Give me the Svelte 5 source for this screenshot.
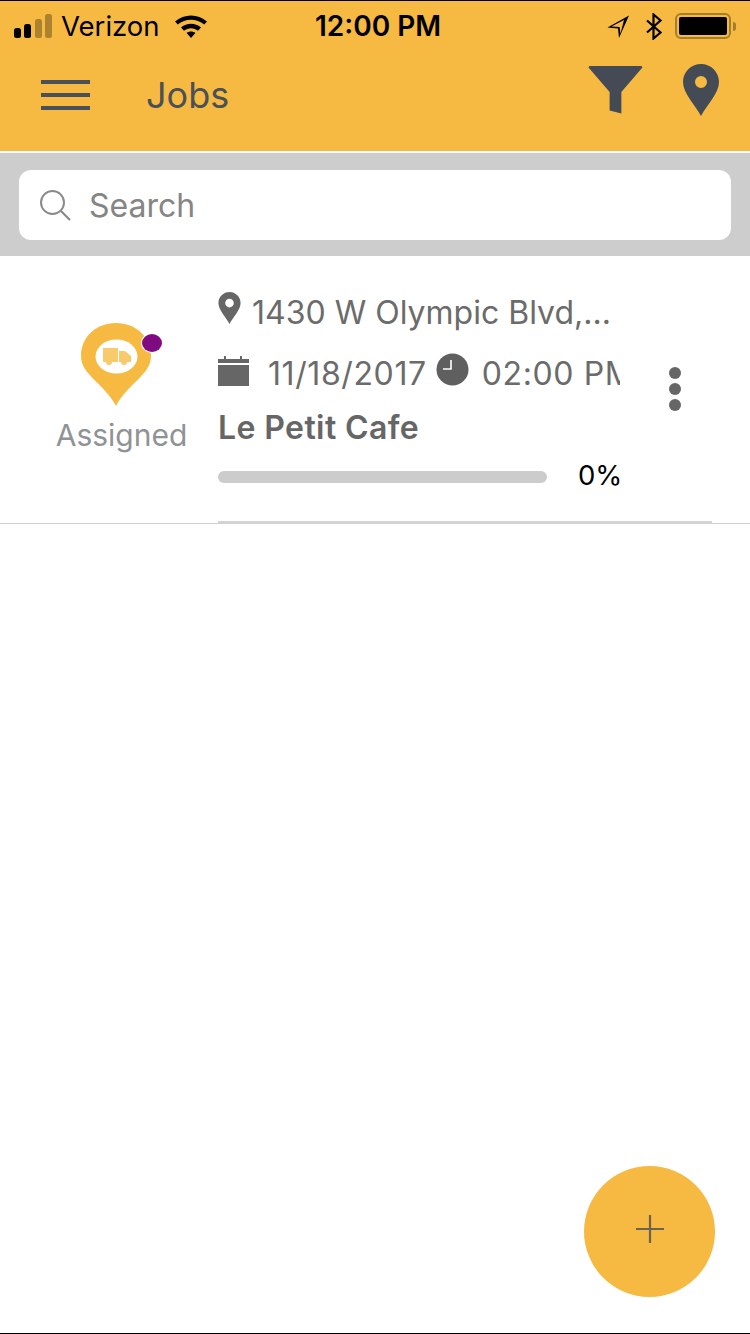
<script>
  const job = {
    address: '1430 W Olympic Blvd,...',
    date: '11/18/2017',
    time: '02:00 PM',
    name: 'Le Petit Cafe',
    status: 'Assigned',
    progress: 0
  };
</script>

<div class="screen">
  <header class="top">
    <div class="status">
      <div class="status-left">
        <svg class="signal" width="40" height="24" viewBox="0 0 40 24">
          <rect x="0" y="14" width="7" height="10" rx="2.5" fill="#000" />
          <rect x="10" y="10" width="7" height="14" rx="2.5" fill="#000" />
          <rect x="21" y="5" width="7" height="19" rx="2.5" fill="#000" opacity="0.3" />
          <rect x="31" y="0" width="7" height="24" rx="2.5" fill="#000" opacity="0.3" />
        </svg>
        <span class="carrier">Verizon</span>
        <svg class="wifi" width="34" height="24" viewBox="0 0 34 24">
          <path d="M1 7.5C10 -0.5 24 -0.5 33 7.5L30.2 10.6C22.8 4.2 11.2 4.2 3.8 10.6Z" fill="#000" />
          <path d="M7 13.6C12.8 8.6 21.2 8.6 27 13.6L24 16.8C20 13.4 14 13.4 10 16.8Z" fill="#000" />
          <path d="M12.6 19C15.2 17 18.8 17 21.4 19L17 24Z" fill="#000" />
        </svg>
      </div>
      <span class="clock">12:00 PM</span>
      <div class="status-right">
        <svg width="24" height="24" viewBox="0 0 24 24">
          <path d="M23 1.5L1.5 13.5L12 14.5L13 24Z M18 6L5.5 12.5L13.6 13L14.5 19.5Z" fill="#000" fill-rule="evenodd" />
        </svg>
        <svg class="bt" width="18" height="27" viewBox="0 0 18 27">
          <path d="M2 7.5L15.5 19.5L8.5 25.5V1.5L15.5 7.5L2 19.5" fill="none" stroke="#000" stroke-width="2.2" />
        </svg>
        <div class="battery"><div class="battery-fill"></div></div>
        <div class="battery-tip"></div>
      </div>
    </div>
    <div class="toolbar">
      <div class="burger"><span></span><span></span><span></span></div>
      <h1>Jobs</h1>
      <svg class="filter" width="56" height="48" viewBox="0 0 56 49">
        <path d="M1 1.5Q1 0 3 0H54Q56 0 56 1.5L34.5 26.5V48.5L22.5 45.5V26.5Z" fill="#444b55" />
      </svg>
      <svg class="pin" width="36" height="52" viewBox="0 0 36 52">
        <path fill-rule="evenodd" d="M18 0C8 0 0 8 0 18C0 29 12 41 18 52C24 41 36 29 36 18C36 8 28 0 18 0ZM18 12A6 6 0 1 1 18 24A6 6 0 1 1 18 12Z" fill="#444b55" />
      </svg>
    </div>
  </header>

  <div class="search-wrap">
    <div class="search">
      <svg width="32" height="32" viewBox="0 0 32 32">
        <circle cx="13.5" cy="13.5" r="11.5" fill="none" stroke="#8a8a8a" stroke-width="2" />
        <path d="M22 22L31 31" stroke="#8a8a8a" stroke-width="2.2" />
      </svg>
      <span>Search</span>
    </div>
  </div>

  <section class="row">
    <div class="state">
      <div class="marker">
        <svg width="72" height="84" viewBox="0 0 72 84">
          <path d="M36 0C16 0 1 14 1 33C1 52 24 60 36 83C48 60 71 52 71 33C71 14 56 0 36 0Z" fill="#f6ba42" />
          <ellipse cx="36.5" cy="33.5" rx="21" ry="17" fill="#fff" />
          <path d="M23 25H38V39H23Z M39 28H45L51 33V39H39Z" fill="#f8ca6c" />
          <circle cx="29" cy="39" r="3" fill="#f8ca6c" />
          <circle cx="44" cy="39" r="3" fill="#f8ca6c" />
        </svg>
        <span class="dot"></span>
      </div>
      <span class="state-label">{job.status}</span>
    </div>

    <div class="info">
      <div class="line address">
        <svg width="23" height="32" viewBox="0 0 36 52">
          <path fill-rule="evenodd" d="M18 0C8 0 0 8 0 18C0 29 12 41 18 52C24 41 36 29 36 18C36 8 28 0 18 0ZM18 11A7 7 0 1 1 18 25A7 7 0 1 1 18 11Z" fill="#666" />
        </svg>
        <span>{job.address}</span>
      </div>
      <div class="line when">
        <svg class="cal" width="31" height="30" viewBox="0 0 31 30">
          <path d="M0 3H6V0H8V3H22V0H24V3H31V7H0Z M0 9H31V30H0Z" fill="#666" />
        </svg>
        <span class="date">{job.date}</span>
        <svg class="time-icon" width="33" height="33" viewBox="0 0 33 33">
          <circle cx="16.5" cy="16.5" r="16" fill="#5f5f5f" />
          <path d="M15 7V16H7" fill="none" stroke="#fff" stroke-width="1.6" />
        </svg>
        <span class="time">{job.time}</span>
      </div>
      <div class="name">{job.name}</div>
      <div class="progress">
        <div class="track"></div>
        <span>{job.progress}%</span>
      </div>
    </div>

    <div class="more"><i></i><i></i><i></i></div>
    <div class="inner-line"></div>
  </section>

  <button class="fab" aria-label="Add job">
    <svg width="30" height="30" viewBox="0 0 30 30">
      <path d="M15 1V29M1 15H29" stroke="#6b6250" stroke-width="2.2" />
    </svg>
  </button>
</div>

<style>
  :global(body) {
    margin: 0;
    background: #fff;
  }

  .screen {
    position: relative;
    width: 750px;
    height: 1334px;
    box-sizing: border-box;
    border-top: 1px solid #000;
    border-bottom: 1px solid #000;
    overflow: hidden;
    background: #fff;
    font-family: Inter, Roboto, "Liberation Sans", sans-serif;
  }

  .top {
    background: #f6ba42;
    height: 150px;
  }

  .status {
    height: 50px;
    padding: 0 14px 0 14px;
    display: flex;
    align-items: center;
    color: #000;
  }

  .status-left {
    width: 301px;
    flex: none;
    display: flex;
    align-items: center;
  }

  .signal {
    flex: none;
    margin-right: 7px;
  }

  .carrier {
    font-size: 27.5px;
    margin-right: 14px;
  }

  .clock {
    font-size: 28px;
    font-weight: 600;
    white-space: nowrap;
  }

  .status-right {
    margin-left: auto;
    display: flex;
    align-items: center;
    justify-content: flex-end;
  }

  .bt {
    margin: 0 12px 0 15px;
  }

  .battery {
    box-sizing: border-box;
    width: 56px;
    height: 26px;
    border: 2px solid #a47e2e;
    border-radius: 6px;
    padding: 2px;
  }

  .battery-fill {
    height: 100%;
    background: #000;
    border-radius: 2px;
  }

  .battery-tip {
    width: 3px;
    height: 9px;
    margin-left: 2px;
    background: #a47e2e;
    border-radius: 0 3px 3px 0;
  }

  .toolbar {
    height: 100px;
    padding: 0 31px 0 41px;
    display: flex;
    align-items: center;
  }

  .burger {
    width: 49px;
    display: flex;
    flex-direction: column;
    gap: 9px;
    margin-top: -12px;
  }

  .burger span {
    height: 4px;
    background: #4a4f58;
  }

  h1 {
    margin: -12px auto 0 56px;
    font-size: 36px;
    font-weight: 400;
    color: #4a5058;
  }

  .filter {
    margin: -22px 40px 0 0;
  }

  .pin {
    margin-top: -22px;
  }

  .search-wrap {
    margin-top: 2px;
    height: 103px;
    box-sizing: border-box;
    padding: 17px 19px 16px;
    background: #cdcdcd;
  }

  .search {
    height: 70px;
    background: #fff;
    border-radius: 12px;
    display: flex;
    align-items: center;
    padding-left: 20px;
    gap: 18px;
    font-size: 32px;
    color: #858585;
  }

  .row {
    position: relative;
    height: 268px;
    box-sizing: border-box;
    border-bottom: 1px solid #cfcfcf;
    display: flex;
  }

  .state {
    width: 218px;
    flex: none;
    padding: 67px 0 0 25px;
    box-sizing: border-box;
    display: flex;
    flex-direction: column;
    align-items: center;
  }

  .marker {
    position: relative;
    width: 72px;
    height: 84px;
    margin-right: 11px;
  }

  .marker svg {
    display: block;
  }

  .dot {
    position: absolute;
    top: 11px;
    right: -10px;
    width: 20px;
    height: 18px;
    border-radius: 50%;
    background: #800a80;
    box-shadow: 0 0 0 1px #fff;
  }

  .state-label {
    margin-top: 10px;
    font-size: 30px;
    color: #8f9296;
    white-space: nowrap;
  }

  .info {
    width: 402px;
    flex: none;
    padding-top: 36px;
    color: #6b6b6b;
  }

  .line {
    display: flex;
    white-space: nowrap;
    font-size: 32px;
  }

  .address {
    align-items: center;
    gap: 11px;
    height: 40px;
  }

  .address svg {
    flex: none;
    margin-top: -8px;
  }

  /* the time runs past the column and gets cut, same as the app */
  .when {
    align-items: center;
    height: 40px;
    margin-top: 21px;
    letter-spacing: 0.6px;
    overflow: hidden;
  }

  .cal {
    flex: none;
    margin: -4px 19px 0 0;
  }

  .time-icon {
    flex: none;
    margin: -8px 13px 0 9px;
  }

  .name {
    margin-top: 15px;
    font-size: 32px;
    font-weight: 600;
    letter-spacing: 0.4px;
    line-height: 40px;
    color: #666;
  }

  .progress {
    display: flex;
    align-items: center;
    margin-top: 14px;
    color: #000;
    font-size: 27.5px;
    white-space: nowrap;
  }

  .progress span {
    margin-top: -4px;
  }

  .track {
    flex: none;
    width: 329px;
    height: 12px;
    border-radius: 6px;
    background: #cccccc;
    margin-right: 31px;
  }

  .more {
    position: absolute;
    top: 111px;
    left: 669px;
    display: flex;
    flex-direction: column;
    gap: 4px;
  }

  .more i {
    width: 12px;
    height: 12px;
    border-radius: 50%;
    background: #666;
  }

  .inner-line {
    position: absolute;
    left: 218px;
    bottom: 0;
    width: 494px;
    height: 2px;
    background: #d4d4d4;
  }

  .fab {
    position: absolute;
    left: 584px;
    top: 1165px;
    width: 131px;
    height: 131px;
    border: none;
    border-radius: 50%;
    background: #f6ba42;
    padding: 0 0 5px;
    display: flex;
    align-items: center;
    justify-content: center;
  }
</style>
